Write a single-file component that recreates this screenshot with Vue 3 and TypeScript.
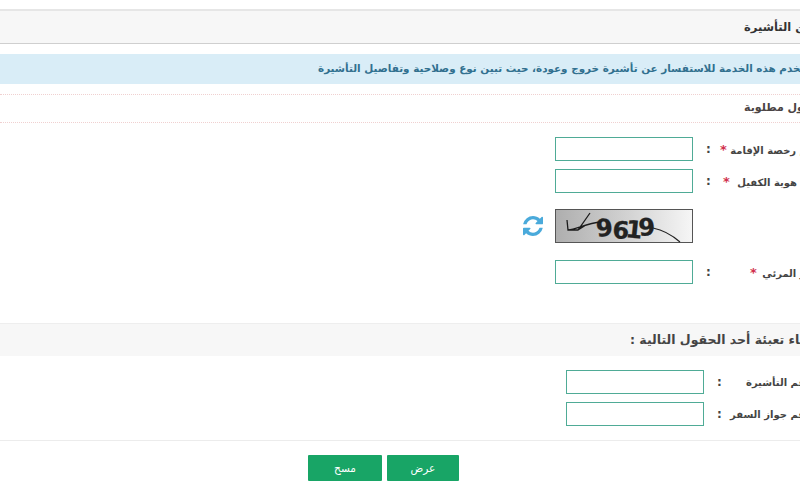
<script setup lang="ts">
interface Field {
  label: string
  required: boolean
  cls: string
}
const primary: Field[] = [
  { label: 'رقم رخصة الإقامة', required: true, cls: 'a' },
  { label: 'رقم هوية الكفيل', required: true, cls: 'b' },
]
const secondary: Field[] = [
  { label: 'رقم التأشيرة', required: false, cls: 'd' },
  { label: 'رقم جواز السفر', required: false, cls: 'e' },
]
</script>

<template>
  <div class="viewport">
    <div class="page" dir="rtl">
      <h1 class="title"><span>الاستعلام عن التأشيرة</span></h1>
      <p class="info">تستخدم هذه الخدمة للاستفسار عن تأشيرة خروج وعودة، حيث تبين نوع وصلاحية وتفاصيل التأشيرة</p>
      <p class="note">جميع الحقول مطلوبة</p>

      <div class="form">
        <div v-for="f in primary" :key="f.label" class="row">
          <label class="label" :class="f.cls">{{ f.label }} <span class="star">*</span></label>
          <span class="colon">:</span>
          <input class="field" type="text" />
        </div>
        <div class="captcha-row">
          <svg class="captcha" width="138" height="34" viewBox="0 0 138 34">
            <defs>
              <linearGradient id="cg" x1="0" x2="1" y1="0" y2="0">
                <stop offset="0" stop-color="#aeaeae" />
                <stop offset="0.55" stop-color="#d4d4d4" />
                <stop offset="1" stop-color="#f6f6f6" />
              </linearGradient>
            </defs>
            <rect x="0.5" y="0.5" width="137" height="33" fill="url(#cg)" stroke="#555" />
            <text x="42 57 70 84" y="28 29 28 27" rotate="-6 4 6 -4" class="captcha-text">9619</text>
            <path d="M12 11 L13 21 L23 21 L35 4 M13 21 C22 20 32 14 46 13 M23 21 L31 16" fill="none" stroke="#1c1c1c" stroke-width="1.3" />
            <path d="M98 19 C108 21 117 26 125 33" fill="none" stroke="#222" stroke-width="1.1" />
          </svg>
          <svg class="refresh" width="20" height="20" viewBox="0 0 1536 1536">
            <path fill="#4aaadb" d="M1511 928q0 5-1 7-64 268-268 434.5t-478 166.5q-146 0-282.5-55t-243.5-157l-129 129q-19 19-45 19t-45-19-19-45v-448q0-26 19-45t45-19h448q26 0 45 19t19 45-19 45l-137 137q71 66 161 102t187 36q134 0 250-65t186-179q11-17 53-117 8-23 30-23h192q13 0 22.5 9.5t9.5 22.5zm25-800v448q0 26-19 45t-45 19h-448q-26 0-45-19t-19-45 19-45l138-138q-148-137-349-137-134 0-250 65t-186 179q-11 17-53 117-8 23-30 23h-199q-13 0-22.5-9.5t-9.5-22.5v-7q65-268 270-434.5t480-166.5q146 0 284 55.5t245 156.5l130-129q19-19 45-19t45 19 19 45z" />
          </svg>
        </div>
        <div class="row">
          <label class="label c">الرمز المرئي <span class="star">*</span></label>
          <span class="colon">:</span>
          <input class="field" type="text" />
        </div>
      </div>

      <h2 class="section">الرجاء تعبئة أحد الحقول التالية :</h2>

      <div class="form alt">
        <div v-for="f in secondary" :key="f.label" class="row">
          <label class="label" :class="f.cls">{{ f.label }}</label>
          <span class="colon">:</span>
          <input class="field" type="text" />
        </div>
      </div>

      <div class="actions">
        <button class="btn show" type="button">عرض</button>
        <button class="btn clear" type="button">مسح</button>
      </div>
    </div>
  </div>
</template>

<style>
html, body { margin: 0; background: #fff; }
</style>

<style scoped>
.viewport {
  width: 800px;
  height: 500px;
  overflow: hidden;
  background: #fff;
  padding-top: 9px;
  box-sizing: border-box;
  font-family: "DejaVu Sans", sans-serif;
}
.page { width: 900px; }
.title {
  margin: 0;
  height: 32px;
  background: #f7f7f7;
  border-top: 2px solid #e6e6e6;
  border-bottom: 1px solid #cfcfcf;
  line-height: 32px;
  font-size: 11.5px;
  font-weight: 700;
  color: #333;
  text-align: left;
  padding-left: 744px;
  white-space: nowrap;
}
.info {
  margin: 10px 0 0;
  height: 30px;
  line-height: 29px;
  background: #d9edf7;
  color: #31708f;
  font-size: 10.4px;
  font-weight: 700;
  text-align: left;
  padding-left: 318px;
  white-space: nowrap;
}
.note {
  margin: 10px 0 0;
  height: 27px;
  line-height: 26px;
  border-top: 1px dotted #f0d0d0;
  border-bottom: 1px dotted #f0d0d0;
  font-size: 11px;
  font-weight: 700;
  color: #4a4444;
  text-align: left;
  padding-left: 744px;
  white-space: nowrap;
}
.form { padding: 14px 0 0; }
.row {
  display: grid;
  grid-template-columns: 183px 24px 138px;
  height: 24px;
  margin-bottom: 8px;
  align-items: center;
}
.label {
  font-size: 10px;
  font-weight: 700;
  color: #444;
  text-align: left;
  white-space: nowrap;
}
.label.a { padding-left: 3px; }
.label.b { padding-left: 6px; }
.label.c { padding-left: 33px; }
.label.d { padding-left: 18px; }
.label.e { padding-left: 2px; }
.label.b .star { margin-right: 4px; }
.label.c .star { margin-right: 2px; }
.star { color: #d1304d; font-size: 13px; }
.colon {
  text-align: left;
  padding-left: 13px;
  font-size: 12px;
  font-weight: 700;
  color: #444;
}
.field {
  width: 138px;
  height: 24px;
  box-sizing: border-box;
  border: 1px solid #4fab96;
  background: #fff;
  outline: none;
  padding: 0 4px;
}
.captcha-row {
  display: flex;
  align-items: center;
  height: 34px;
  margin: 16px 207px 17px 0;
}
.captcha { display: block; direction: ltr; }
.refresh { margin-right: 12px; }
.captcha-text {
  font-family: "DejaVu Sans", sans-serif;
  font-weight: 700;
  font-size: 24px;
  fill: #222;
  stroke: #222;
  stroke-width: 0.3;
}
.section {
  margin: 39px 0 0;
  height: 32px;
  line-height: 32px;
  background: #f7f7f7;
  border-top: 1px solid #eee;
  font-size: 12.5px;
  font-weight: 700;
  color: #444;
  text-align: left;
  padding-left: 630px;
  white-space: nowrap;
}
.alt { padding-top: 14px; }
.alt .row { grid-template-columns: 172px 24px 138px; }
.actions {
  border-top: 1px solid #ececec;
  margin-top: 14px;
  padding: 14px 441px 0 0;
  display: flex;
  gap: 5px;
}
.btn {
  height: 26px;
  border: 0;
  border-radius: 1px;
  background: #18a566;
  color: #fff;
  font-family: "DejaVu Sans", sans-serif;
  font-size: 10.5px;
  padding: 0;
}
.btn.show { width: 72px; }
.btn.clear { width: 74px; }
</style>
